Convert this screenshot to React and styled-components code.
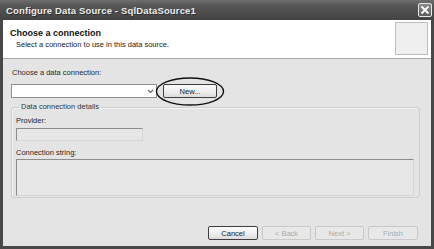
import React from 'react';
import styled, { createGlobalStyle } from 'styled-components';

const Global = createGlobalStyle`
  html, body {
    margin: 0;
    padding: 0;
    background: #ffffff;
  }
  * {
    box-sizing: border-box;
  }
`;

const Frame = styled.div`
  width: 434px;
  height: 249px;
  display: flex;
  flex-direction: column;
  background: #474747;
  font-family: 'Liberation Sans', Arial, sans-serif;
  font-size: 8px;
  color: #1a1a1a;
  -webkit-font-smoothing: antialiased;
`;

const TitleBar = styled.div`
  height: 20px;
  display: flex;
  align-items: center;
  justify-content: space-between;
  padding: 0 6px 0 6px;
  background: linear-gradient(#6e6e6e 0%, #555 30%, #4c4c4c 70%, #424242 100%);
  color: #ececec;
  font-weight: bold;
  font-size: 9.5px;
  letter-spacing: 0.15px;
  text-shadow: 1px 1px 0 #2e2e2e;
`;

const CloseBox = styled.div`
  width: 14px;
  height: 14px;
  margin-right: -4px;
  border: 1px solid #e8e8e8;
  border-radius: 2px;
  background: linear-gradient(#8a8a8a, #5c5c5c);
  display: flex;
  align-items: center;
  justify-content: center;
`;

const Client = styled.div`
  flex: 1;
  margin: 0 3px 3px 3px;
  display: flex;
  flex-direction: column;
  background: #e4e4e4;
`;

const Header = styled.div`
  height: 39px;
  background: #ffffff;
  border-bottom: 1px solid #a8a8a8;
  display: flex;
  justify-content: space-between;
  padding: 2px 3px 0 7px;
`;

const HeaderText = styled.div`
  padding-top: 6px;
  h1 {
    margin: 0;
    font-size: 9px;
    font-weight: bold;
    color: #111;
    line-height: 11px;
  }
  p {
    margin: 1px 0 0 6px;
    font-size: 7.5px;
    line-height: 10px;
    color: #222;
  }
`;

const Picture = styled.div`
  width: 33px;
  height: 33px;
  background: #efefef;
  border: 1px solid #bdbdbd;
`;

const Body = styled.div`
  flex: 1;
  padding: 9px 11px 0 8px;
  display: flex;
  flex-direction: column;
`;

const Label = styled.div`
  font-size: 7.5px;
  line-height: 10px;
  margin-left: ${(p) => p.indent ?? 1}px;
  margin-top: ${(p) => p.mt || 0}px;
  color: #262626;
`;

const ComboRow = styled.div`
  margin-top: 6px;
  display: flex;
  align-items: center;
`;

const Combo = styled.div`
  width: 146px;
  height: 14px;
  background: #ffffff;
  border: 1px solid #8e8e8e;
  display: flex;
  justify-content: flex-end;
  align-items: center;
  padding-right: 2px;
`;

const NewWrap = styled.div`
  position: relative;
  margin-left: 6px;
`;

const Button = styled.div`
  width: ${(p) => p.w || 49}px;
  height: 14px;
  display: flex;
  align-items: center;
  justify-content: center;
  font-size: 7.5px;
  border: 1px solid ${(p) => (p.disabled ? '#c9c9c9' : '#3e3e3e')};
  border-radius: 2px;
  background: ${(p) =>
    p.disabled ? '#e8e8e8' : 'linear-gradient(#fbfbfb, #ececec 60%, #dcdcdc)'};
  color: ${(p) => (p.disabled ? '#ababab' : '#1c1c1c')};
`;

const Ellipse = styled.svg`
  position: absolute;
  left: -8px;
  top: -7px;
  pointer-events: none;
`;

const Group = styled.fieldset`
  margin: 4px 0 0 0;
  height: 96px;
  padding: 0 5px 0 4px;
  border: 1px solid #cfcfcf;
  border-radius: 3px;
  box-shadow: inset 1px 1px 0 #f4f4f4;
  legend {
    padding: 0 2px;
    margin-left: 3px;
    font-size: 7.5px;
    line-height: 10px;
    color: #333;
  }
`;

const Field = styled.div`
  margin-top: ${(p) => p.mt || 0}px;
  width: ${(p) => (p.full ? '100%' : `${p.w}px`)};
  height: ${(p) => p.h}px;
  border: 1px solid #8c8c8c;
  border-right-color: #d6d6d6;
  border-bottom-color: #d6d6d6;
  background: #e6e6e6;
`;

const Footer = styled.div`
  display: flex;
  justify-content: flex-end;
  gap: 4px;
  padding: 0 13px 6px 0;
`;

export default function App() {
  return (
    <>
      <Global />
      <Frame>
        <TitleBar>
          <span>Configure Data Source - SqlDataSource1</span>
          <CloseBox>
            <svg width="10" height="10" viewBox="0 0 10 10">
              <path d="M1.5 1.5 L8.5 8.5 M8.5 1.5 L1.5 8.5" stroke="#fff" strokeWidth="1.8" />
            </svg>
          </CloseBox>
        </TitleBar>
        <Client>
          <Header>
            <HeaderText>
              <h1>Choose a connection</h1>
              <p>Select a connection to use in this data source.</p>
            </HeaderText>
            <Picture />
          </Header>
          <Body>
            <Label>Choose a data connection:</Label>
            <ComboRow>
              <Combo>
                <svg width="7" height="5" viewBox="0 0 7 5">
                  <path d="M1 1 L3.5 3.5 L6 1" stroke="#666" strokeWidth="1.2" fill="none" />
                </svg>
              </Combo>
              <NewWrap>
                <Button w={54}>New...</Button>
                <Ellipse width="70" height="30" viewBox="0 0 70 30">
                  <ellipse cx="35" cy="14.5" rx="33.5" ry="13.5" fill="none" stroke="#111" strokeWidth="1.4" />
                </Ellipse>
              </NewWrap>
            </ComboRow>
            <Group>
              <legend>Data connection details</legend>
              <Label indent={0} mt={4}>Provider:</Label>
              <Field w={127} h={13} mt={2} />
              <Label indent={0} mt={7}>Connection string:</Label>
              <Field full h={37} mt={1} />
            </Group>
          </Body>
          <Footer>
            <Button w={50}>Cancel</Button>
            <Button disabled>&lt; Back</Button>
            <Button disabled>Next &gt;</Button>
            <Button disabled w={50}>Finish</Button>
          </Footer>
        </Client>
      </Frame>
    </>
  );
}
